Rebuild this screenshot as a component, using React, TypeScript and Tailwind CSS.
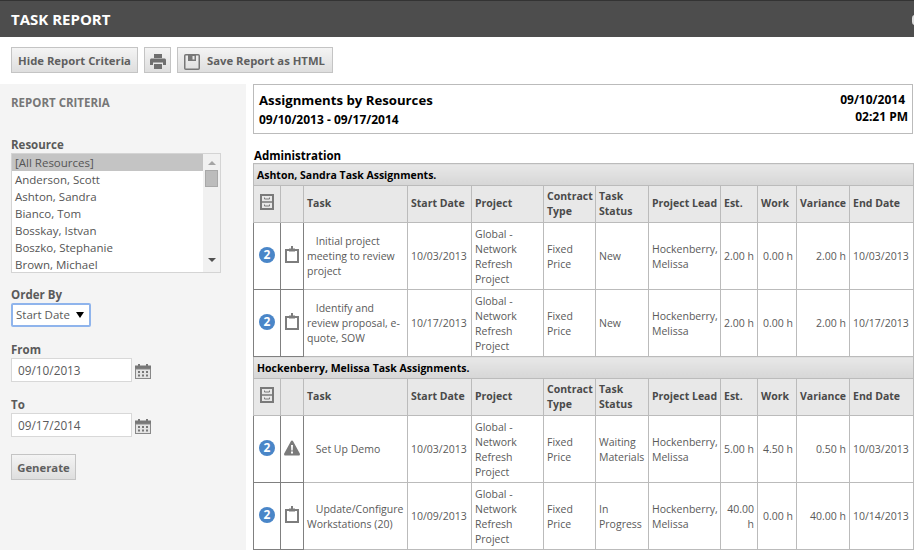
const font = "font-['Open_Sans',sans-serif]";

const resources = ['[All Resources]', 'Anderson, Scott', 'Ashton, Sandra', 'Bianco, Tom', 'Bosskay, Istvan', 'Boszko, Stephanie', 'Brown, Michael'];

interface Row {
  icon: 'clip' | 'warn';
  task: string;
  start: string;
  contract: string[];
  status: string;
  est: string;
  work: string;
  variance: string;
  end: string;
}

const groups: { title: string; rows: Row[] }[] = [
  {
    title: 'Ashton, Sandra Task Assignments.',
    rows: [
      { icon: 'clip', task: 'Initial project meeting to review project', start: '10/03/2013', contract: ['Fixed', 'Price'], status: 'New', est: '2.00 h', work: '0.00 h', variance: '2.00 h', end: '10/03/2013' },
      { icon: 'clip', task: 'Identify and review proposal, e-quote, SOW', start: '10/17/2013', contract: ['Fixed', 'Price'], status: 'New', est: '2.00 h', work: '0.00 h', variance: '2.00 h', end: '10/17/2013' }
    ]
  },
  {
    title: 'Hockenberry, Melissa Task Assignments.',
    rows: [
      { icon: 'warn', task: 'Set Up Demo', start: '10/03/2013', contract: ['Fixed', 'Price'], status: 'Waiting Materials', est: '5.00 h', work: '4.50 h', variance: '0.50 h', end: '10/03/2013' },
      { icon: 'clip', task: 'Update/Configure Workstations (20)', start: '10/09/2013', contract: ['Fixed', 'Price'], status: 'In Progress', est: '40.00 h', work: '0.00 h', variance: '40.00 h', end: '10/14/2013' }
    ]
  }
];

function CabinetIcon() {
  return (
    <svg width="14" height="16" viewBox="0 0 14 16" className="mx-auto mb-1 block">
      <rect x="1" y="1" width="12" height="14" fill="none" stroke="#7a7a7a" strokeWidth="2" />
      <path d="M1 8h12" stroke="#7a7a7a" strokeWidth="1.500" />
      <path d="M4.500 3.500v1.500h5V3.500M4.500 10.500v1.500h5v-1.500" fill="none" stroke="#7a7a7a" />
    </svg>
  );
}

function ClipIcon() {
  return (
    <svg width="14" height="17" viewBox="0 0 14 17" className="mx-auto mb-1 block">
      <path d="M4 4H1v12h12V4h-3" fill="none" stroke="#7d7d7d" strokeWidth="2" />
      <path d="M4 5.500V2.500h2V0h2v2.500h2v3z" fill="#7d7d7d" />
    </svg>
  );
}

function WarnIcon() {
  return (
    <svg width="16" height="16" viewBox="0 0 16 15" className="mx-auto mb-[3px] block">
      <path d="M8 0c.5 0 .9.3 1.100.7l6.700 12.400c.4.8-.1 1.900-1.100 1.900H1.300C.3 15-.2 13.900.2 13.100L6.900.7C7.100.3 7.500 0 8 0z" fill="#7b7b7b" />
      <path d="M7 4.500h2l-.3 5.500H7.300zM7 11h2v2H7z" fill="#fff" />
    </svg>
  );
}

function CalendarIcon() {
  return (
    <svg width="16" height="15" viewBox="0 0 16 15" className="ml-[3px] mt-[3px] shrink-0">
      <path d="M0 1.500h16V5H0z" fill="#777" />
      <path d="M3 0h2v2H3zM11 0h2v2h-2z" fill="#777" />
      <rect x="0.500" y="5" width="15" height="9.500" fill="#e4e4e4" stroke="#888" />
      <path d="M3 7h2v2H3zM7 7h2v2H7zM11 7h2v2h-2zM3 10.500h2v2H3zM7 10.500h2v2H7zM11 10.500h2v2h-2z" fill="#777" />
    </svg>
  );
}

function PrintIcon() {
  return (
    <svg width="16" height="15" viewBox="0 0 16 15">
      <path d="M4 0h8v4H4zM1.500 4.500h13c.8 0 1.500.7 1.500 1.500v5h-3V8.500H3V11H0V6c0-.8.7-1.500 1.500-1.500z" fill="#6f6f6f" />
      <path d="M4 10h8v5H4z" fill="#6f6f6f" />
    </svg>
  );
}

function FloppyIcon() {
  return (
    <svg width="16" height="16" viewBox="0 0 16 16" className="shrink-0">
      <rect x="0.750" y="0.750" width="14.500" height="14.500" rx="1" fill="none" stroke="#777" strokeWidth="1.500" />
      <path d="M4 1h8v6H4z" fill="#777" />
      <path d="M8.500 2h2v3.500h-2z" fill="#e8e8e8" />
    </svg>
  );
}

function Badge() {
  return (
    <div className="mx-auto mb-[2px] flex h-4 w-4 items-center justify-center rounded-full bg-[#4a86c8] text-[12px] font-bold leading-none text-white">2</div>
  );
}

function HeadRow() {
  const th = 'border border-[#bbb] bg-[#e8e8e8] px-[3px] pb-[1px] text-left align-middle text-[10.5px] font-bold leading-[15px] text-[#4a4a4a]';
  return (
    <tr className="h-[37px]">
      <th className={th}><CabinetIcon /></th>
      <th className={th}></th>
      <th className={th}>Task</th>
      <th className={th}>Start Date</th>
      <th className={th}>Project</th>
      <th className={th}>Contract Type</th>
      <th className={th}>Task Status</th>
      <th className={th}>{'Project\u00a0Lead'}</th>
      <th className={th}>Est.</th>
      <th className={th}>Work</th>
      <th className={th}>Variance</th>
      <th className={th}>End Date</th>
    </tr>
  );
}

function TaskRow({ row }: { row: Row }) {
  const td = 'border border-[#bbb] px-[3px] pt-[1px] align-middle text-[10.5px] leading-[15px] text-[#5a5a5a]';
  const dark = 'border border-[#808080] px-0 align-middle';
  return (
    <tr className="h-[67px]">
      <td className={dark}><Badge /></td>
      <td className={dark}>{row.icon === 'warn' ? <WarnIcon /> : <ClipIcon />}</td>
      <td className={`${td} border-l-[#808080]`}><span className="ml-[6px]">&nbsp;</span>{row.task}</td>
      <td className={td}>{row.start}</td>
      <td className={td}>Global - Network Refresh Project</td>
      <td className={td}>{row.contract[0]}<br />{row.contract[1]}</td>
      <td className={td}>{row.status}</td>
      <td className={td}>Hockenberry, Melissa</td>
      <td className={`${td} text-right`}>{row.est}</td>
      <td className={`${td} text-right`}>{row.work}</td>
      <td className={`${td} text-right`}>{row.variance}</td>
      <td className={td}>{row.end}</td>
    </tr>
  );
}

function Button({ children, className }: { children: React.ReactNode; className?: string }) {
  return (
    <button className={`flex h-[26px] items-center whitespace-nowrap border border-[#c4c4c4] bg-gradient-to-b from-[#f4f4f4] to-[#dedede] pt-[3px] text-[11.3px] font-bold text-[#5f5f5f] ${className ?? ''}`}>
      {children}
    </button>
  );
}

function DateField({ label, value }: { label: string; value: string }) {
  return (
    <div className="mt-[13px] pt-[2px]">
      <div className="text-[11.5px] font-bold leading-[16px] text-[#5a5a5a]">{label}</div>
      <div className="flex items-center">
        <div className="flex h-6 w-[121px] items-center border border-[#d8d8d8] bg-white pl-[6px] pt-[1px] text-[11.8px] text-[#5a5a5a]">{value}</div>
        <CalendarIcon />
      </div>
    </div>
  );
}

function GroupRows({ title, rows }: { title: string; rows: Row[] }) {
  return (
    <>
      <tr className="h-[22px]">
        <td colSpan={12} className="border border-[#bbb] bg-gradient-to-b from-[#e8e8e8] to-[#d6d6d6] px-[3px] pt-[2px] text-[10.5px] font-bold text-black">{title}</td>
      </tr>
      <HeadRow />
      {rows.map(r => (
        <TaskRow key={r.task} row={r} />
      ))}
    </>
  );
}

export default function App() {
  return (
    <div className={`${font} h-[550px] w-[914px] overflow-hidden bg-white`}>
      <div className="relative flex h-[37px] items-center overflow-hidden border-t border-[#333] bg-[#4d4d4d] pl-[11px]">
        <span className="text-[15px] font-bold text-white">TASK REPORT</span>
        <div className="absolute -right-[4px] top-[14px] h-[10px] w-[6px] rounded-full bg-[#ddd]"></div>
      </div>

      <div className="flex h-[47px] items-start gap-[6px] pl-[11px] pt-[10px]">
        <Button className="w-[127px] justify-center">Hide Report Criteria</Button>
        <Button className="w-[27px] justify-center"><PrintIcon /></Button>
        <Button className="w-[156px] gap-[7px] pl-[6px]"><FloppyIcon />Save Report as HTML</Button>
      </div>

      <div className="flex">
        <aside className="h-[466px] w-[246px] shrink-0 bg-[#f4f4f4] pl-[11px]">
          <div className="pt-[11px] text-[11.5px] font-bold leading-[16px] text-[#777]">REPORT CRITERIA</div>
          <div className="mt-[26px] text-[11.5px] font-bold leading-[16px] text-[#5a5a5a]">Resource</div>
          <div className="flex h-[120px] w-[210px] border border-[#d4d4d4] bg-white">
            <div className="flex-1 overflow-hidden text-[11.5px] leading-[17px] text-[#555]">
              {resources.map((r, i) => (
                <div key={r} className={`pl-[3px] ${i === 0 ? 'bg-[#c4c4c4]' : ''}`}>{r}</div>
              ))}
            </div>
            <div className="flex w-[17px] flex-col items-center bg-[#f1f1f1] pt-[7px]">
              <div className="h-0 w-0 border-x-[4px] border-b-[4px] border-x-transparent border-b-[#a5a5a5]"></div>
              <div className="mt-[5px] h-[17px] w-[13px] border border-[#a8a8a8] bg-[#bcbcbc]"></div>
              <div className="mt-[71px] h-0 w-0 border-x-[4px] border-t-[4px] border-x-transparent border-t-[#505050]"></div>
            </div>
          </div>
          <div className="mt-[14px] text-[11.5px] font-bold leading-[16px] text-[#5a5a5a]">Order By</div>
          <div className="flex h-6 w-20 items-center justify-between rounded-[2px] border-2 border-[#8fb4ec] bg-white pl-[3px] pr-[5px] text-[11.5px] text-[#5a5a5a]">
            Start Date
            <div className="h-0 w-0 border-x-[4px] border-t-[6px] border-x-transparent border-t-black"></div>
          </div>
          <DateField label="From" value="09/10/2013" />
          <DateField label="To" value="09/17/2014" />
          <Button className="mt-[17px] w-[65px] justify-center">Generate</Button>
        </aside>

        <main className="ml-[7px] w-[660px] shrink-0">
          <div className="flex h-[50px] justify-between border border-[#bbb] pl-[5px] pr-1 pt-[6px] text-[12px] font-bold text-black">
            <div>
              <div className="text-[13.2px] leading-[19px]">Assignments by Resources</div>
              <div className="leading-[19px]">09/10/2013 - 09/17/2014</div>
            </div>
            <div className="text-right leading-[17px]">
              <div className="pr-[3px]">09/10/2014</div>
              <div>02:21 PM</div>
            </div>
          </div>
          <div className="mt-[14px] h-[15px] pl-[1px] text-[11.5px] font-bold leading-[15px] text-black">Administration</div>
          <table className="w-[660px] table-fixed border-collapse">
            <colgroup>
              <col className="w-[27px]" />
              <col className="w-[23px]" />
              <col className="w-[104px]" />
              <col className="w-[64px]" />
              <col className="w-[72px]" />
              <col className="w-[52px]" />
              <col className="w-[53px]" />
              <col className="w-[72px]" />
              <col className="w-[37px]" />
              <col className="w-[39px]" />
              <col className="w-[53px]" />
              <col className="w-[64px]" />
            </colgroup>
            <tbody>
              {groups.map(g => (
                <GroupRows key={g.title} title={g.title} rows={g.rows} />
              ))}
            </tbody>
          </table>
        </main>
      </div>
    </div>
  );
}
